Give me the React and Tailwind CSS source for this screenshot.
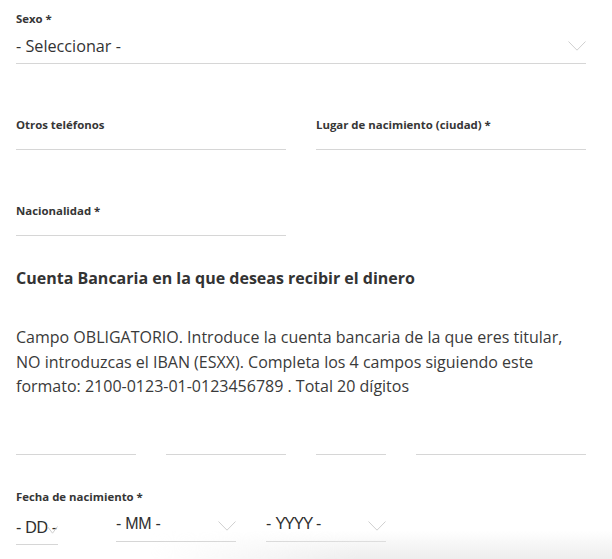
const SANS = "font-['Open_Sans',sans-serif]"

function Chevron({ className = '', w = 18, h = 10 }) {
  return (
    <svg width={w} height={h} viewBox={`0 0 ${w} ${h}`} className={className} aria-hidden="true">
      <polyline
        points={`0.5,0.5 ${w / 2},${h - 0.8} ${w - 0.5},0.5`}
        fill="none"
        stroke="#cfcfcf"
        strokeWidth="1"
      />
    </svg>
  )
}

function Label({ children }) {
  return <div className="h-4 text-[11.4px] leading-4 font-bold text-[#363636] whitespace-nowrap">{children}</div>
}

function TextField({ label }) {
  return (
    <div>
      <Label>{label}</Label>
      <div className="h-[17px] border-b border-[#d6d6d6]" />
    </div>
  )
}

function DateSelect({ children, width, chevronW = 18 }) {
  return (
    <div
      className="relative h-[37px] border-b border-[#d6d6d6] font-['Liberation_Sans',Arial,sans-serif] text-[16px] leading-5 text-[#2f2f2f] pt-[9px] tracking-[-0.3px] whitespace-nowrap"
      style={{ width }}
    >
      {children}
      <Chevron className="absolute right-0 top-[16px]" w={chevronW} h={10} />
    </div>
  )
}

export default function App() {
  const bank = ['w-[120px]', 'w-[120px]', 'w-[70px]', 'w-[170px]']

  return (
    <div className={`relative w-[612px] h-[559px] overflow-hidden bg-white ${SANS} text-[#333]`}>
      <div className="pl-4 w-[586px] pt-[11px]">
        {/* Sexo */}
        <Label>Sexo *</Label>
        <div className="relative h-[37px] border-b border-[#d6d6d6] pt-[7px] text-[16.2px] leading-6 text-[#333]">
          - Seleccionar -
          <Chevron className="absolute right-0 top-[14px]" />
        </div>

        <div className="mt-[53px] grid grid-cols-2 gap-[30px]">
          <TextField label="Otros teléfonos" />
          <TextField label="Lugar de nacimiento (ciudad) *" />
        </div>

        <div className="mt-[53px] grid grid-cols-2 gap-[30px]">
          <TextField label="Nacionalidad *" />
        </div>

        <h3 className="mt-[32px] text-[16px] leading-5 font-bold text-[#333]">
          Cuenta Bancaria en la que deseas recibir el dinero
        </h3>

        <p className="mt-[37px] w-[565px] text-[16px] leading-[24.5px] text-[#3a3a3a]">
          Campo OBLIGATORIO. Introduce la cuenta bancaria de la que eres titular, NO introduzcas el
          IBAN (ESXX). Completa los 4 campos siguiendo este formato: 2100-0123-01-0123456789 .
          Total 20 dígitos
        </p>

        <div className="mt-[25px] flex gap-[30px]">
          {bank.map((w, i) => (
            <div key={i} className={`${w} h-[31px] border-b border-[#d6d6d6]`} />
          ))}
        </div>

        <div className="mt-[34px]">
          <Label>Fecha de nacimiento *</Label>
          <div className="flex items-start gap-[30px]">
            <div className="w-[70px]">
              <div className="relative w-[42px] h-[40px] border-b border-[#d6d6d6] pt-[13px] font-['Liberation_Sans',Arial,sans-serif] text-[16px] leading-5 text-[#2f2f2f] whitespace-nowrap tracking-[-0.3px]">
                - DD -
                <Chevron className="absolute right-0 top-[21px]" w={11} h={8} />
              </div>
            </div>
            <DateSelect width={120}>- MM -</DateSelect>
            <DateSelect width={120}>
              - <span className="tracking-[-1.5px]">YYYY</span> -
            </DateSelect>
          </div>
        </div>
      </div>

      {/* soft shadow at the bottom edge */}
      <div className="pointer-events-none absolute left-[150px] right-0 bottom-0 h-[28px] bg-linear-to-b from-white/0 to-[#ededed] [mask-image:linear-gradient(to_right,transparent,black_45%)]" />
    </div>
  )
}
